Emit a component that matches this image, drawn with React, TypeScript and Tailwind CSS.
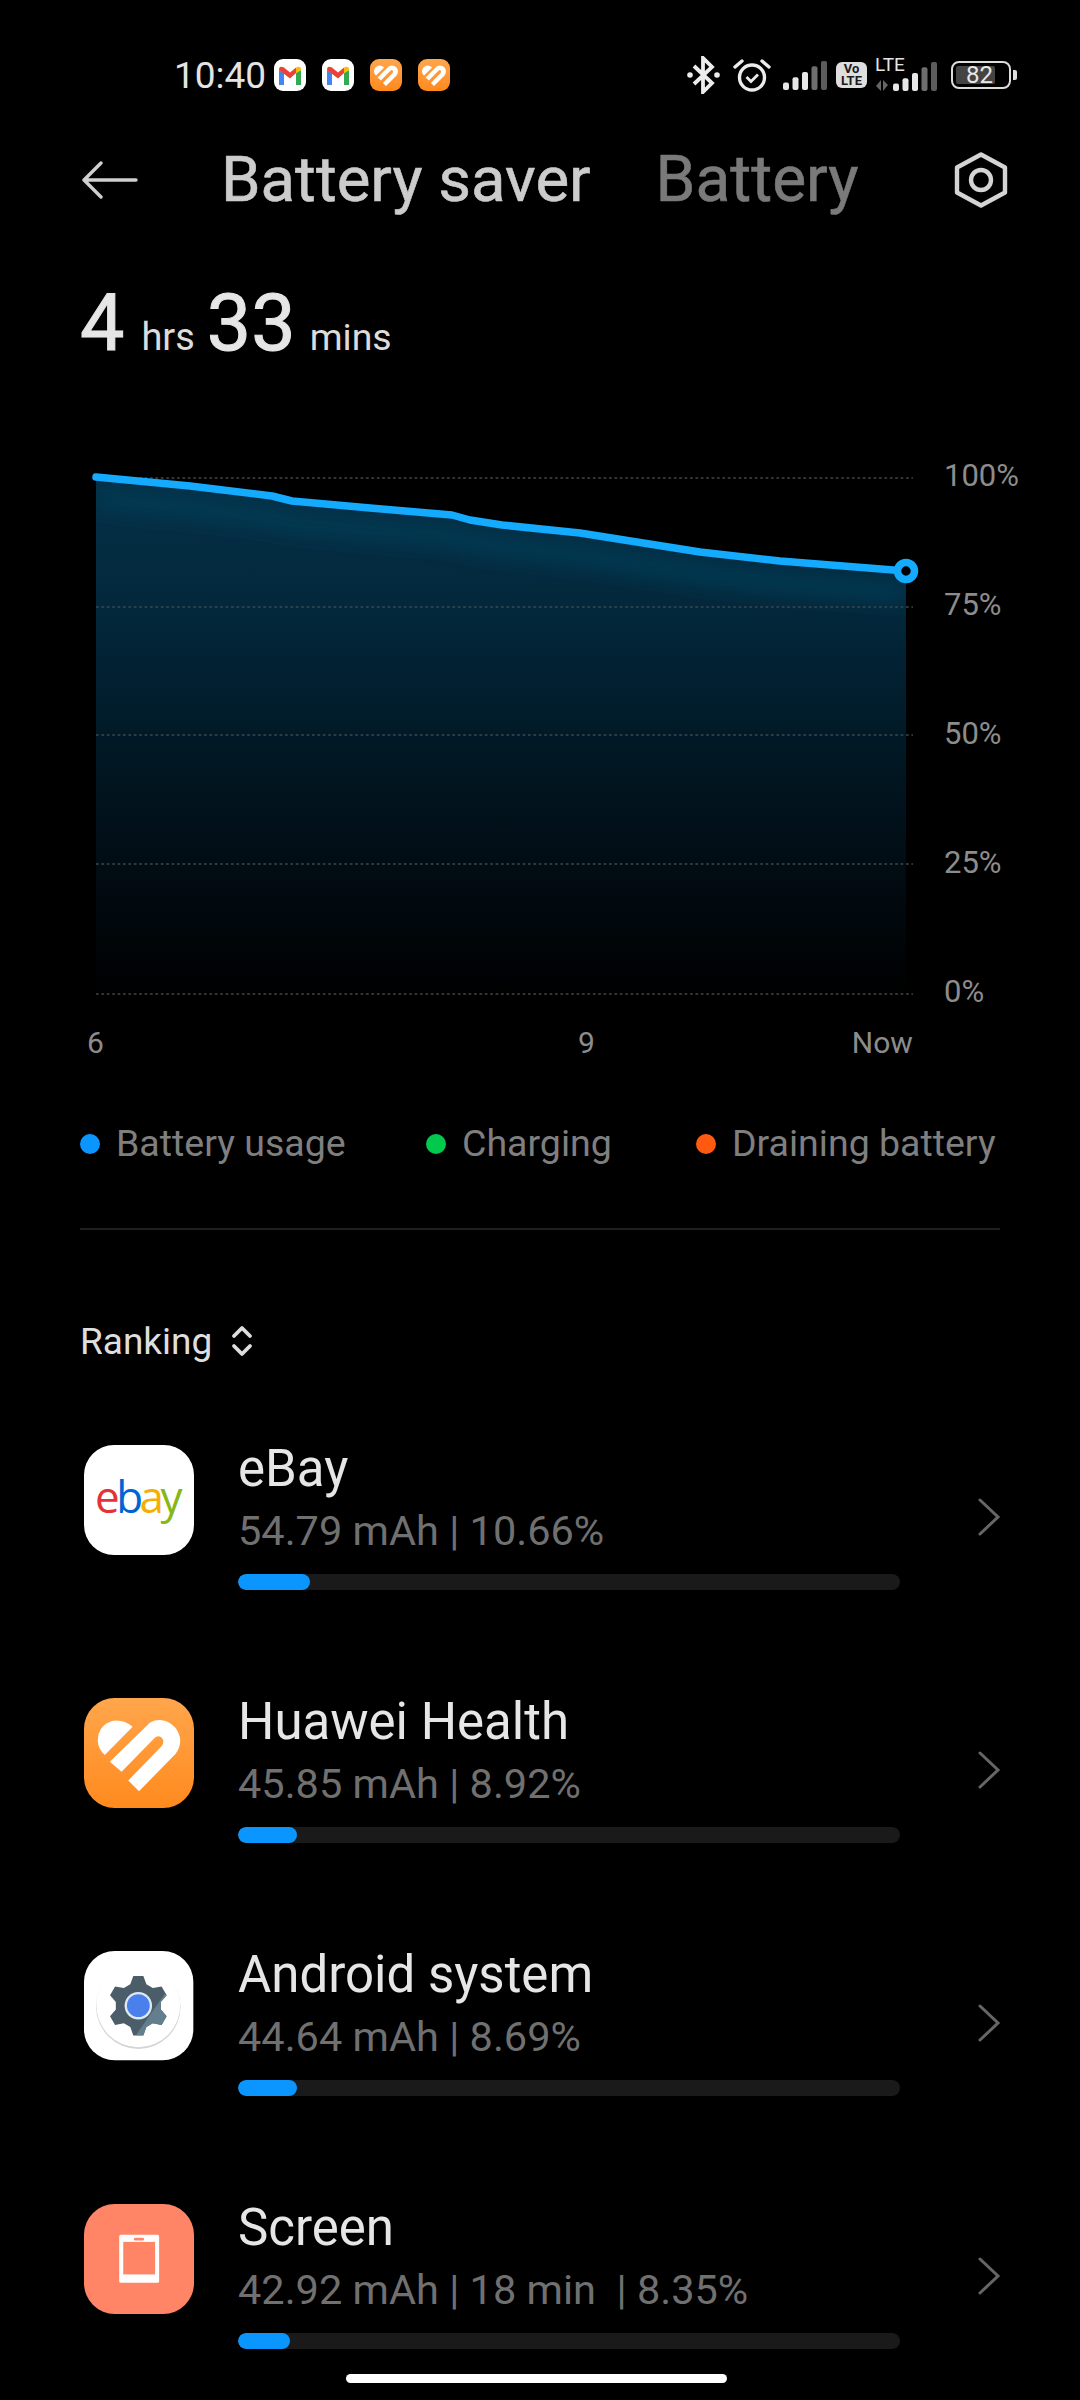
import React from "react";

const font = { fontFamily: '"Roboto", "Noto Sans", sans-serif' };

function Heart({ size }: { size: number }) {
  return (
    <svg width={size} height={size} viewBox="73 832 328 328" className="block">
      <defs>
        <linearGradient id={`hg${size}`} x1="0" y1="0" x2="0" y2="1">
          <stop offset="0" stopColor="#ffa64c" />
          <stop offset="1" stopColor="#ff8a1e" />
        </linearGradient>
      </defs>
      <rect x="73" y="832" width="328" height="328" rx="92" fill={`url(#hg${size})`} />
      <path d="M135 1002 L218 918 Q190 895 160 900 Q115 912 114 960 Q116 985 135 1002 Z" fill="#fff" />
      <path d="M237 1110 L345 1000 Q375 960 345 920 Q310 885 270 905 L150 1022 L185 1052 L285 950 Q300 940 308 955 Q312 965 305 975 L205 1078 Z" fill="#fff" />
    </svg>
  );
}

function Gmail() {
  return (
    <svg width="32" height="32" viewBox="0 0 32 32" className="block">
      <rect width="32" height="32" rx="9" fill="#fff" />
      <path d="M5 11 L5 26 L10 26 L10 14 Z" fill="#4285f4" />
      <path d="M22 14 L22 26 L27 26 L27 11 Z" fill="#34a853" />
      <path d="M5 11 Q5 6 10 8.5 L16 13.5 L22 8.5 L22 14 L16 19.5 L5 11 Z" fill="#ea4335" />
      <path d="M22 8.5 Q27 6 27 11 L22 14 Z" fill="#fbbc04" />
    </svg>
  );
}

function gearPath(cx: number, cy: number, R: number, r: number) {
  const pts: string[] = [];
  for (let i = 0; i < 6; i++) {
    const a = (i * Math.PI) / 3 - Math.PI / 2;
    const d = 0.24;
    const e = 0.36;
    const p = [
      [a - e, r],
      [a - d * 0.7, R],
      [a + d * 0.7, R],
      [a + e, r],
    ];
    p.forEach(([t, q]) => pts.push(`${(cx + q * Math.cos(t)).toFixed(1)} ${(cy + q * Math.sin(t)).toFixed(1)}`));
  }
  return "M" + pts.join(" L") + " Z";
}

function AndroidIcon() {
  const g = gearPath(237, 225, 90, 68);
  return (
    <svg width="110" height="110" viewBox="75 62 328 328" className="block">
      <defs>
        <clipPath id="gearclip">
          <path d={g} />
        </clipPath>
      </defs>
      <rect x="75" y="62" width="326" height="326" rx="92" fill="#fff" />
      <circle cx="237" cy="228" r="126" fill="#d4d4d4" />
      <circle cx="237" cy="224" r="125" fill="#fff" />
      <path d={g} fill="#4b5d68" />
      <path d="M330 170 L330 300 L225 320 L270 255 Z" fill="#637f8d" clipPath="url(#gearclip)" />
      <circle cx="237" cy="225" r="41" fill="#dfe8f5" />
      <circle cx="237" cy="225" r="34" fill="#4a80ec" />
    </svg>
  );
}

function ScreenIcon() {
  return (
    <svg width="110" height="110" viewBox="73 820 328 328" className="block">
      <rect x="73" y="820" width="328" height="328" rx="92" fill="#ff8566" />
      <rect x="178" y="912" width="119" height="143" rx="5" fill="#fff" />
      <rect x="190" y="933" width="95" height="97" fill="#ff8566" />
      <rect x="222" y="921" width="30" height="8" rx="4" fill="#ff8566" />
    </svg>
  );
}

function EbayIcon() {
  return (
    <div className="w-[110px] h-[110px] rounded-[30px] bg-white flex items-center justify-center">
      <span className="text-[44px] leading-none tracking-[-3.5px] mb-[8px] pr-[4px]" style={{ fontFamily: '"Open Sans", sans-serif' }}>
        <span className="text-[#e53238]">e</span>
        <span className="text-[#0064d2]">b</span>
        <span className="text-[#f5af02]">a</span>
        <span className="text-[#86b817]">y</span>
      </span>
    </div>
  );
}

function Bars({ w, h }: { w: number; h: number }) {
  const n = 5;
  const bw = 6;
  const gap = (w - n * bw) / (n - 1);
  return (
    <svg width={w} height={h} viewBox={`0 0 ${w} ${h}`} className="block">
      {[0.26, 0.44, 0.62, 0.82, 1].map((f, i) => (
        <rect
          key={i}
          x={i * (bw + gap)}
          y={h - h * f}
          width={bw}
          height={h * f}
          rx="2"
          fill={i >= 3 ? (i === 4 ? "#5c5c5c" : "#6e6e6e") : "#e8e8e8"}
        />
      ))}
    </svg>
  );
}

function StatusBar() {
  return (
    <div className="h-[120px] pt-[30px] flex items-center pl-[174px] text-[#e4e4e4]" style={font}>
      <span className="text-[37px] leading-none w-[100px]">10:40</span>
      <div className="flex gap-[16px]">
        <Gmail />
        <Gmail />
        <Heart size={32} />
        <Heart size={32} />
      </div>
      <svg width="33" height="38" viewBox="0 0 33 38" className="block ml-[237px]" fill="none" stroke="#ececec" strokeWidth="3.8">
        <path d="M7 10 L25 27 L16 36 L16 2 L25 11 L7 28" strokeLinejoin="miter" />
        <circle cx="3" cy="19" r="2.8" fill="#ececec" stroke="none" />
        <circle cx="30" cy="19" r="2.8" fill="#ececec" stroke="none" />
      </svg>
      <svg width="38" height="34" viewBox="0 0 38 34" className="block ml-[13px]" fill="none" stroke="#ececec" strokeWidth="3.4">
        <circle cx="19" cy="19.5" r="12.5" />
        <path d="M13.5 19 L18 23.5 L25 16.5" strokeWidth="2.8" />
        <path d="M2 9 L9 3 M29 3 L36 9" strokeLinecap="round" />
      </svg>
      <div className="ml-[12px]">
        <Bars w={44} h={29} />
      </div>
      <div className="ml-[9px] w-[31px] h-[26px] rounded-[6px] bg-[#dedede] flex flex-col items-center justify-center text-[#1a1a1a] font-bold text-[13px] leading-[12px]">
        <span>Vo</span>
        <span>LTE</span>
      </div>
      <div className="ml-[8px] relative w-[62px] h-[32px]">
        <span className="absolute left-0 top-[-4px] text-[19px] leading-none text-[#e4e4e4]">LTE</span>
        <svg width="14" height="11" viewBox="0 0 14 11" className="absolute left-0 bottom-0">
          <path d="M6 0 V11 L1 6 Z" fill="#666" />
          <path d="M8 0 V11 L13 5 Z" fill="#666" />
        </svg>
        <div className="absolute left-[18px] bottom-0">
          <Bars w={44} h={29} />
        </div>
      </div>
      <div className="ml-[14px] relative w-[60px] h-[28px] rounded-[8px] border-[2.5px] border-[#dcdcdc] flex items-center p-[3px]">
        <div className="w-[39px] h-full bg-[#444] rounded-[2px] flex items-center justify-end pr-[2px]">
          <span className="text-[24px] leading-none text-[#e8e8e8]">82</span>
        </div>
      </div>
      <div className="ml-[2px] w-[4px] h-[10px] bg-[#dcdcdc] rounded-r-[2px]" />
    </div>
  );
}

function Header() {
  return (
    <div className="h-[120px] flex items-center pl-[82px] pr-[72px]" style={font}>
      <svg width="56" height="38" viewBox="0 0 56 38" className="block" fill="none" stroke="#cfcfcf" strokeWidth="3.4" strokeLinecap="round" strokeLinejoin="round">
        <path d="M19 2 L2 19 L19 36 M2 19 H54" />
      </svg>
      <span className="ml-[83px] text-[63.5px] leading-none [-webkit-text-stroke:0.6px] text-[#cccccc]">Battery saver</span>
      <span className="ml-[65px] text-[64px] leading-none [-webkit-text-stroke:0.6px] text-[#7a7a7a]">Battery</span>
      <svg width="54" height="56" viewBox="0 0 54 56" className="block ml-auto" fill="none" stroke="#d4d4d4" strokeWidth="4.4">
        <path d="M27 2.5 L51 15.5 V40.5 L27 53.5 L3 40.5 V15.5 Z" strokeLinejoin="round" />
        <circle cx="27" cy="28" r="10" />
      </svg>
    </div>
  );
}

function Duration() {
  return (
    <div className="h-[100px] mt-[33px] flex items-center pl-[80px] text-[#e6e6e6]" style={font}>
      <div className="flex items-baseline">
        <span className="text-[79px] leading-none [-webkit-text-stroke:1px]">4</span>
        <span className="text-[38px] leading-none ml-[17px] text-[#dcdcdc]">hrs</span>
        <span className="text-[79px] leading-none ml-[12px] [-webkit-text-stroke:1px]">33</span>
        <span className="text-[37.5px] leading-none ml-[14px] text-[#dcdcdc]">mins</span>
      </div>
    </div>
  );
}

function Chart() {
  const pts: [number, number][] = [
    [96, 477], [190, 486], [272, 496], [292, 501], [370, 508], [452, 515], [470, 520], [502, 525], [580, 533], [700, 552], [780, 561], [906, 571],
  ];
  const line = pts.map((p) => p.join(" ")).join(" L");
  const grid = [478, 607, 735, 864, 994];
  return (
    <div className="mt-[90px] flex h-[546px] pl-[80px]" style={font}>
      <svg width="840" height="546" viewBox="80 463 840 546" className="block shrink-0">
        <defs>
          <linearGradient id="area" x1="0" y1="477" x2="0" y2="994" gradientUnits="userSpaceOnUse">
            <stop offset="0" stopColor="#053048" />
            <stop offset="0.25" stopColor="#03283c" />
            <stop offset="0.55" stopColor="#011723" />
            <stop offset="0.8" stopColor="#010a10" />
            <stop offset="1" stopColor="#000" />
          </linearGradient>
          <clipPath id="areaclip">
            <path d={`M${line} L906 994 L96 994 Z`} />
          </clipPath>
          <filter id="soft" x="-5%" y="-50%" width="110%" height="200%">
            <feGaussianBlur stdDeviation="10" />
          </filter>
        </defs>
        <path d={`M${line} L906 994 L96 994 Z`} fill="url(#area)" />
        <g clipPath="url(#areaclip)">
          <path d={`M${line}`} transform="translate(0 22)" fill="none" stroke="#063c57" strokeWidth="16" filter="url(#soft)" />
        </g>
        {grid.map((y) => (
          <line key={y} x1="96" x2="913" y1={y} y2={y} stroke="#3d474d" strokeWidth="1.6" strokeDasharray="2.7 2.7" />
        ))}
        <path d={`M${line}`} fill="none" stroke="#14abff" strokeWidth="7.5" strokeLinejoin="round" strokeLinecap="round" />
        <circle cx="906" cy="571" r="8.5" fill="#000" stroke="#14abff" strokeWidth="7.5" />
      </svg>
      <div className="flex flex-col justify-between pl-[24px] mt-[-2px] mb-[2px] text-[31px] leading-[30px] text-[#8c8c8c]">
        <span>100%</span>
        <span>75%</span>
        <span>50%</span>
        <span>25%</span>
        <span>0%</span>
      </div>
    </div>
  );
}

function Axis() {
  return (
    <div className="mt-[16px] h-[36px] flex items-center pl-[87px] text-[30px] leading-none text-[#8c8c8c]" style={font}>
      <span>6</span>
      <span className="ml-[474px]">9</span>
      <span className="ml-[257px]">Now</span>
    </div>
  );
}

function Legend() {
  const items = [
    { c: "bg-[#0a95ff]", t: "Battery usage", w: "w-[346px]" },
    { c: "bg-[#00c94d]", t: "Charging", w: "w-[270px]" },
    { c: "bg-[#ff5a10]", t: "Draining battery", w: "" },
  ];
  return (
    <div className="mt-[61px] h-[44px] flex items-center pl-[80px] text-[37.5px] leading-none text-[#7f7f7f]" style={font}>
      {items.map((i) => (
        <div key={i.t} className={`flex items-center gap-[16px] ${i.w}`}>
          <span className={`w-[20px] h-[20px] rounded-full ${i.c}`} />
          <span>{i.t}</span>
        </div>
      ))}
    </div>
  );
}

function Ranking() {
  return (
    <div className="h-[50px] mt-[86px] flex items-center pl-[80px] text-[37px] leading-none text-[#dedede]" style={font}>
      <span>Ranking</span>
      <svg width="22" height="32" viewBox="0 0 22 32" className="block ml-[19px]" fill="none" stroke="#dedede" strokeWidth="3.8" strokeLinecap="round" strokeLinejoin="round">
        <path d="M3 11 L11 3 L19 11 M3 21 L11 29 L19 21" />
      </svg>
    </div>
  );
}

function Row({ icon, title, sub, fill }: { icon: React.ReactNode; title: string; sub: string; fill: string }) {
  return (
    <div className="h-[253px] flex items-start pl-[84px]" style={font}>
      <div className="mt-[22px] shrink-0">{icon}</div>
      <div className="ml-[44px] w-[662px] pt-[15.5px]">
        <div className="text-[51px] leading-[60px] text-[#e6e6e6]">{title}</div>
        <div className="text-[41.5px] leading-[50px] mt-[7.5px] text-[#707070] whitespace-pre">{sub}</div>
        <div className="mt-[18px] h-[16px] rounded-full bg-[#1a1a1a] overflow-hidden">
          <div className={`h-full rounded-full bg-[#0a95ff] ${fill}`} />
        </div>
      </div>
      <svg width="24" height="38" viewBox="0 0 24 38" className="block ml-[77px] mt-[75px]" fill="none" stroke="#666" strokeWidth="3" strokeLinecap="round" strokeLinejoin="miter">
        <path d="M3 2 L21 19 L3 36" />
      </svg>
    </div>
  );
}

export default function App() {
  return (
    <div className="relative w-[1080px] h-[2400px] bg-black overflow-hidden">
      <StatusBar />
      <Header />
      <Duration />
      <Chart />
      <Axis />
      <Legend />
      <div className="mt-[62px] mx-[80px] h-[2px] bg-[#1f1f1f]" />
      <Ranking />
      <div className="mt-[57px]">
        <Row icon={<EbayIcon />} title="eBay" sub="54.79 mAh | 10.66%" fill="w-[72px]" />
        <Row icon={<Heart size={110} />} title="Huawei Health" sub="45.85 mAh | 8.92%" fill="w-[59px]" />
        <Row icon={<AndroidIcon />} title="Android system" sub="44.64 mAh | 8.69%" fill="w-[59px]" />
        <Row icon={<ScreenIcon />} title="Screen" sub="42.92 mAh | 18 min  | 8.35%" fill="w-[52px]" />
      </div>
      <div className="absolute left-[346px] top-[2374px] w-[381px] h-[9px] rounded-full bg-white" />
    </div>
  );
}
